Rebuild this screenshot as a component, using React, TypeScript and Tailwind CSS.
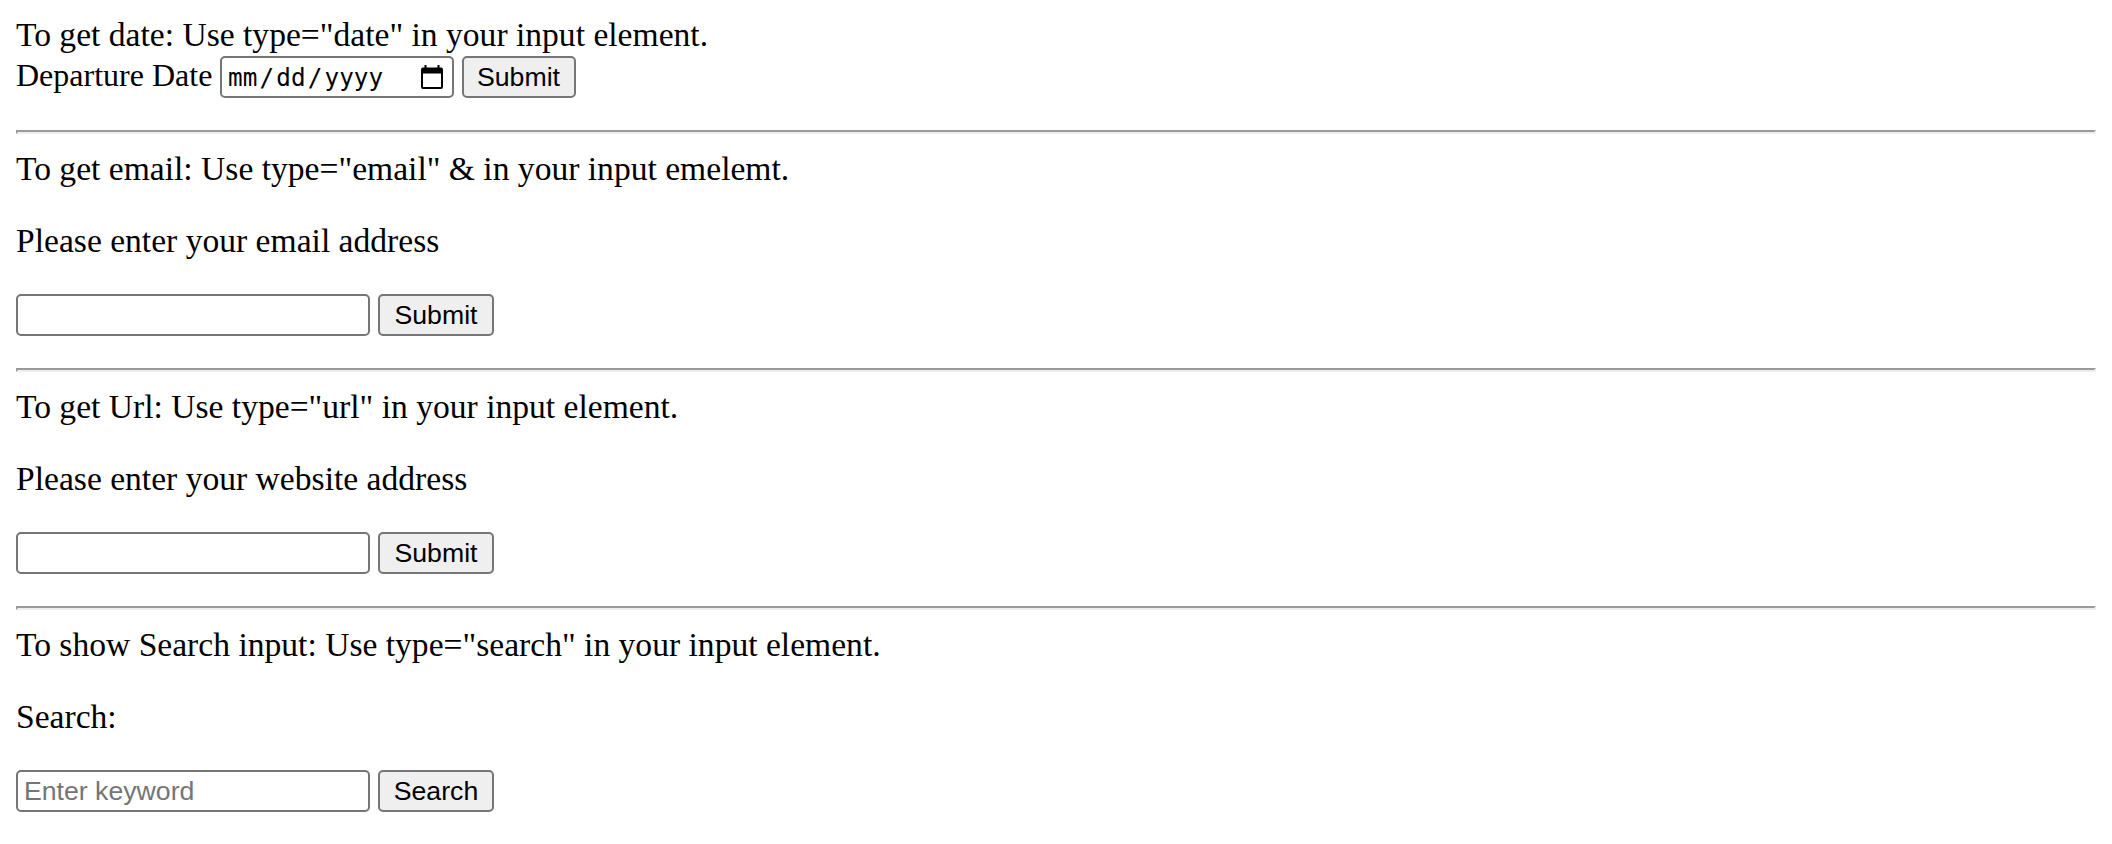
import type { ReactNode } from "react";

function Heading({ children }: { children: ReactNode }) {
  return <div className="h-[40px] whitespace-pre text-[33.6px] leading-[38px]">{children}</div>;
}

function Rule() {
  return (
    <hr className="h-[4px] w-full border-2 border-t-[#9a9a9a] border-r-[#eeeeee] border-b-[#eeeeee] border-l-[#9a9a9a]" />
  );
}

const buttonClass =
  "h-[42px] rounded-[5px] border-2 border-[#767676] bg-[#efefef] p-0 text-center font-['Liberation_Sans',sans-serif] text-[26.67px] leading-[30px] text-black";

type FieldProps = {
  title: string;
  label: string;
  type: string;
  placeholder?: string;
  action: string;
};

function FieldSection({ title, label, type, placeholder, action }: FieldProps) {
  return (
    <section className="flex h-[238px] flex-col">
      <Rule />
      <div className="mt-[16px]">
        <Heading>{title}</Heading>
      </div>
      <p className="mt-[32px] h-[40px] whitespace-pre text-[33.6px] leading-[38px]">{label}</p>
      <form className="mt-[32px] flex gap-2">
        <input
          type={type}
          aria-label={label}
          placeholder={placeholder}
          className="h-[42px] w-[354px] rounded-[5px] border-2 border-[#767676] bg-white px-[6px] py-0 font-['Liberation_Sans',sans-serif] text-[26.67px] leading-[30px] placeholder:text-[#757575]"
        />
        <button type="button" className={`${buttonClass} w-[116px]`}>
          {action}
        </button>
      </form>
    </section>
  );
}

function DateField() {
  return (
    <div className="flex h-[42px] w-[234px] items-center justify-between rounded-[5px] border-2 border-[#767676] bg-white pr-[9px] pl-[6px] font-['DejaVu_Sans_Mono',monospace] text-[24.3px] leading-[30px]">
      <div className="flex pt-[2px]">
        <span>mm</span>
        <span className="w-[19px] text-center">/</span>
        <span>dd</span>
        <span className="w-[19px] text-center">/</span>
        <span>yyyy</span>
      </div>
      <svg width="22" height="24" viewBox="0 0 22 24" aria-hidden="true">
        <path
          fillRule="evenodd"
          d="M3.5 0h2v2.5h11V0h2v2.5H20a2 2 0 0 1 2 2V22a2 2 0 0 1-2 2H2a2 2 0 0 1-2-2V4.500a2 2 0 0 1 2-2h1.500zM2 8.500V22h18V8.500z"
        />
      </svg>
    </div>
  );
}

export default function App() {
  return (
    <main className="min-h-[844px] bg-white px-4 pt-4 font-['Liberation_Serif',serif] text-black">
      <section className="flex h-[114px] flex-col">
        <Heading>{'To get date: Use type="date" in your input element.'}</Heading>
        <form className="flex h-[42px] gap-2">
          <label className="w-[196px] self-baseline whitespace-pre text-[32px] leading-[36px]">Departure Date</label>
          <DateField />
          <button type="button" className={`${buttonClass} w-[114px] self-baseline pr-px`}>
            Submit
          </button>
        </form>
      </section>
      <FieldSection
        title={'To get email: Use type="email" & in your input emelemt.'}
        label="Please enter your email address"
        type="email"
        action="Submit"
      />
      <FieldSection
        title={'To get Url: Use type="url" in your input element.'}
        label="Please enter your website address"
        type="url"
        action="Submit"
      />
      <FieldSection
        title={'To show Search input: Use type="search" in your input element.'}
        label="Search:"
        type="search"
        placeholder="Enter keyword"
        action="Search"
      />
    </main>
  );
}
